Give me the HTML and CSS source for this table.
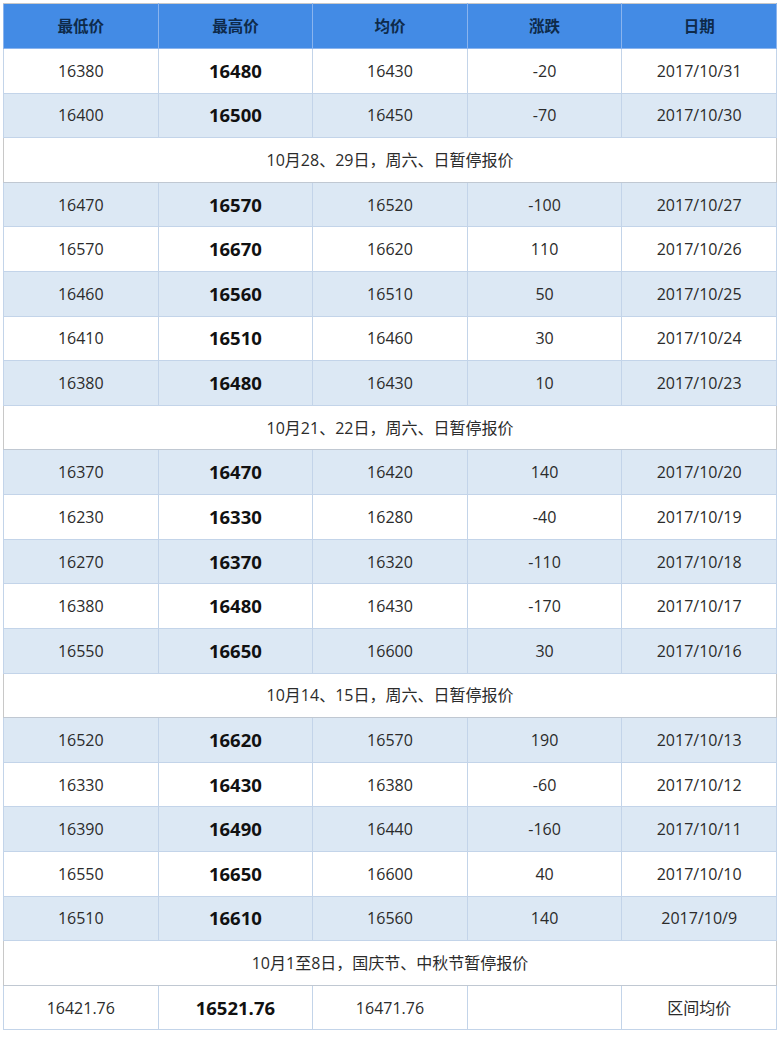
FILE: index.html
```html
<!DOCTYPE html>
<html lang="zh">
<head>
<meta charset="utf-8">
<link rel="stylesheet" href="styles.css">
</head>
<body>
<table class="price">
<thead>
<tr><th>最低价</th><th>最高价</th><th>均价</th><th>涨跌</th><th>日期</th></tr>
</thead>
<tbody>
<tr><td>16380</td><td class="hi">16480</td><td>16430</td><td>-20</td><td>2017/10/31</td></tr>
<tr class="alt"><td>16400</td><td class="hi">16500</td><td>16450</td><td>-70</td><td>2017/10/30</td></tr>
<tr class="note"><td colspan="5">10月28、29日，周六、日暂停报价</td></tr>
<tr class="alt"><td>16470</td><td class="hi">16570</td><td>16520</td><td>-100</td><td>2017/10/27</td></tr>
<tr><td>16570</td><td class="hi">16670</td><td>16620</td><td>110</td><td>2017/10/26</td></tr>
<tr class="alt"><td>16460</td><td class="hi">16560</td><td>16510</td><td>50</td><td>2017/10/25</td></tr>
<tr><td>16410</td><td class="hi">16510</td><td>16460</td><td>30</td><td>2017/10/24</td></tr>
<tr class="alt"><td>16380</td><td class="hi">16480</td><td>16430</td><td>10</td><td>2017/10/23</td></tr>
<tr class="note"><td colspan="5">10月21、22日，周六、日暂停报价</td></tr>
<tr class="alt"><td>16370</td><td class="hi">16470</td><td>16420</td><td>140</td><td>2017/10/20</td></tr>
<tr><td>16230</td><td class="hi">16330</td><td>16280</td><td>-40</td><td>2017/10/19</td></tr>
<tr class="alt"><td>16270</td><td class="hi">16370</td><td>16320</td><td>-110</td><td>2017/10/18</td></tr>
<tr><td>16380</td><td class="hi">16480</td><td>16430</td><td>-170</td><td>2017/10/17</td></tr>
<tr class="alt"><td>16550</td><td class="hi">16650</td><td>16600</td><td>30</td><td>2017/10/16</td></tr>
<tr class="note"><td colspan="5">10月14、15日，周六、日暂停报价</td></tr>
<tr class="alt"><td>16520</td><td class="hi">16620</td><td>16570</td><td>190</td><td>2017/10/13</td></tr>
<tr><td>16330</td><td class="hi">16430</td><td>16380</td><td>-60</td><td>2017/10/12</td></tr>
<tr class="alt"><td>16390</td><td class="hi">16490</td><td>16440</td><td>-160</td><td>2017/10/11</td></tr>
<tr><td>16550</td><td class="hi">16650</td><td>16600</td><td>40</td><td>2017/10/10</td></tr>
<tr class="alt"><td>16510</td><td class="hi">16610</td><td>16560</td><td>140</td><td>2017/10/9</td></tr>
<tr class="note"><td colspan="5">10月1至8日，国庆节、中秋节暂停报价</td></tr>
<tr><td>16421.76</td><td class="hi">16521.76</td><td>16471.76</td><td></td><td>区间均价</td></tr>
</tbody>
</table>
</body>
</html>
```
FILE: styles.css
```css
html, body {
  margin: 0;
  padding: 0;
  background: #ffffff;
}
body {
  padding: 3px;
  font-family: "Open Sans", "Noto Sans CJK SC", sans-serif;
  color: #2b2b2b;
}
.price {
  width: 774px;
  border-collapse: collapse;
  table-layout: fixed;
  border: 1px solid #c8c8c8;
}
.price th,
.price td {
  text-align: center;
  padding: 0;
  border: 1px solid #c3d4e9;
  font-size: 16px;
  line-height: 20px;
}
.price th {
  background: #438be5;
  color: #0e2a4a;
  font-weight: bold;
  font-size: 15.5px;
  height: 44px;
  border-color: #8ab4ee;
  border-top-color: #c8c8c8;
}
.price tbody tr {
  height: 44.62px;
}
.price tr.alt td {
  background: #dce8f4;
}
.price td.hi {
  font-size: 18.5px;
  font-weight: bold;
  color: #111111;
}
.price tr.note td {
  border-left-color: #c8c8c8;
  border-right-color: #c8c8c8;
  border-top-color: #c0c8d2;
  border-bottom-color: #c0c8d2;
}
```
